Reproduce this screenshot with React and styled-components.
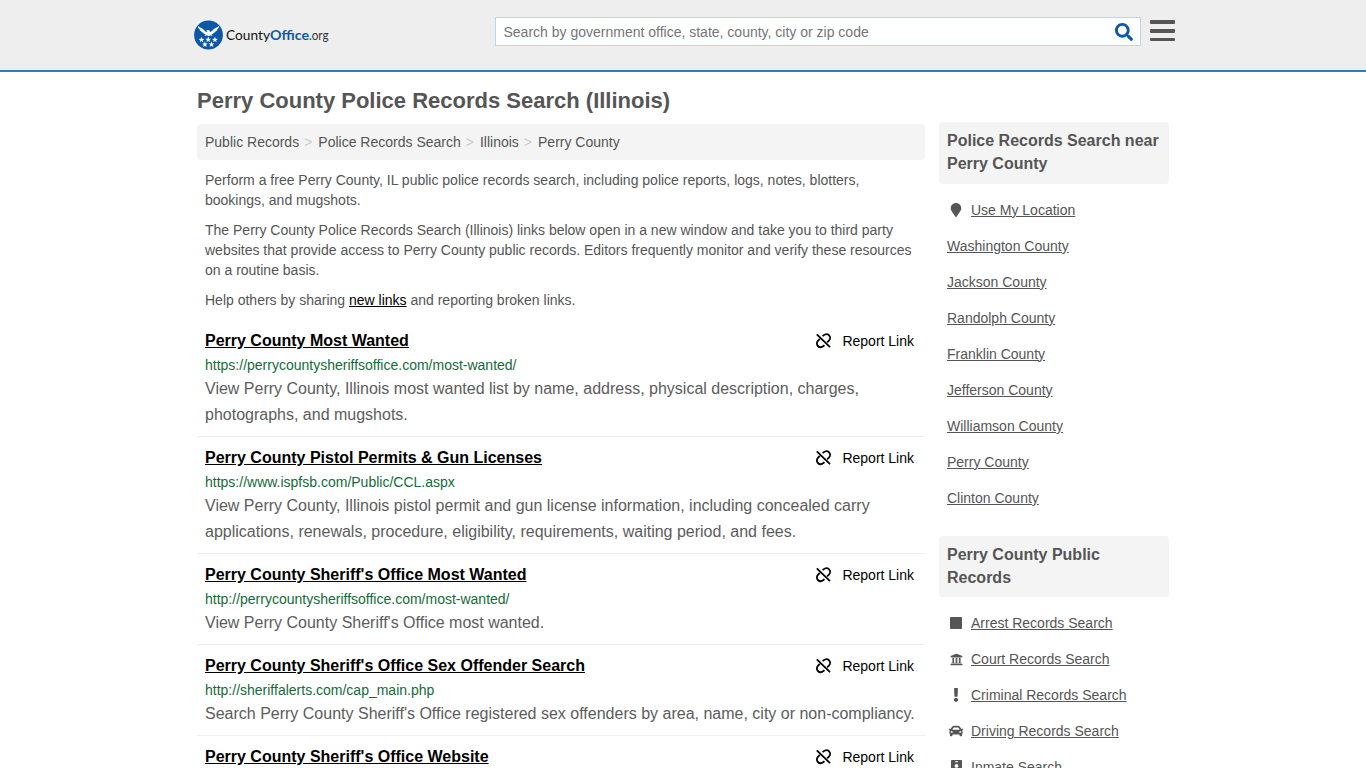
import styled, { createGlobalStyle } from "styled-components";
import { FaSearch, FaMapMarker, FaUniversity, FaExclamation, FaCar } from "react-icons/fa";

const crumbs = ["Public Records", "Police Records Search", "Illinois", "Perry County"];

const links = [
  {
    title: "Perry County Most Wanted",
    url: "https://perrycountysheriffsoffice.com/most-wanted/",
    text: "View Perry County, Illinois most wanted list by name, address, physical description, charges, photographs, and mugshots.",
  },
  {
    title: "Perry County Pistol Permits & Gun Licenses",
    url: "https://www.ispfsb.com/Public/CCL.aspx",
    text: "View Perry County, Illinois pistol permit and gun license information, including concealed carry applications, renewals, procedure, eligibility, requirements, waiting period, and fees.",
  },
  {
    title: "Perry County Sheriff's Office Most Wanted",
    url: "http://perrycountysheriffsoffice.com/most-wanted/",
    text: "View Perry County Sheriff's Office most wanted.",
  },
  {
    title: "Perry County Sheriff's Office Sex Offender Search",
    url: "http://sheriffalerts.com/cap_main.php",
    text: "Search Perry County Sheriff's Office registered sex offenders by area, name, city or non-compliancy.",
  },
  {
    title: "Perry County Sheriff's Office Website",
  },
];

const counties = [
  "Washington County",
  "Jackson County",
  "Randolph County",
  "Franklin County",
  "Jefferson County",
  "Williamson County",
  "Perry County",
  "Clinton County",
];

const records = [
  { name: "Arrest Records Search", icon: <SquareIcon /> },
  { name: "Court Records Search", icon: <FaUniversity size={13} /> },
  { name: "Criminal Records Search", icon: <FaExclamation size={14} /> },
  { name: "Driving Records Search", icon: <FaCar size={14} /> },
  { name: "Inmate Search", icon: <InmateIcon /> },
];

function SquareIcon() {
  return (
    <svg width="12" height="12" viewBox="0 0 12 12">
      <rect width="12" height="12" rx="1" fill="currentColor" />
    </svg>
  );
}

function InmateIcon() {
  return (
    <svg width="11" height="14" viewBox="0 0 11 14">
      <path
        fill="currentColor"
        fillRule="evenodd"
        d="M1 0h9a1 1 0 0 1 1 1v12a1 1 0 0 1-1 1H1a1 1 0 0 1-1-1V1a1 1 0 0 1 1-1zM4 1.2v1h3v-1zM5.5 4a1.9 1.9 0 1 0 0 3.8 1.9 1.9 0 0 0 0-3.8zM2.2 11.4h6.6c0-1.7-1.1-2.8-3.3-2.8s-3.3 1.1-3.3 2.8z"
      />
    </svg>
  );
}

function UnlinkIcon() {
  return (
    <svg width="15" height="16" viewBox="0 0 15 16" fill="none" stroke="#000" strokeWidth="1.8">
      <path d="M.8 1.3 14 14.2" />
      <path d="M6.6 3.2 7.5 2.4c1.8-1.5 4.2-1.4 5.6-.1 1.4 1.5 1.3 3.9-.2 5.4l-1.7 1.6" />
      <path d="M3.8 6 2.1 7.7c-1.5 1.5-1.6 3.9-.2 5.3 1.4 1.4 3.8 1.4 5.6 0l.9-.9" />
    </svg>
  );
}

function Star({ x, y }) {
  return (
    <polygon
      transform={`translate(${x} ${y}) scale(1.2)`}
      points="0,-2.5 .65,-.8 2.4,-.75 1,.35 1.5,2.1 0,1.1 -1.5,2.1 -1,.35 -2.4,-.75 -.65,-.8"
    />
  );
}

function Logo() {
  return (
    <LogoSvg width="140" height="30" viewBox="0 0 140 30">
      <circle cx="14.5" cy="15" r="14.4" fill="#0c57a6" />
      <g fill="#fff">
        <path d="M3.9 6c2 1.6 4.4 2.2 6.2 4 .9.9 1.5 1.7 2.6 2.1l.9-.7-1.4-.3c.4-.9 1.4-1.3 2.4-1 .8.2 1.3.8 1.4 1.9 1.2-.4 1.9-1.1 2.8-2 1.8-1.8 4.2-2.4 6.2-4-.1 1.7-.8 2.9-1.9 3.5.2.7-.4 1.5-1.4 1.8-.1.9-.9 1.4-1.9 1.5-.4.9-1.2 1.3-2.3 1.2l.9 2-2.3-.8-1.6 1-1.6-1-2.3.8.9-2c-1.1.1-1.9-.3-2.3-1.2-1-.1-1.8-.6-1.9-1.5-1-.3-1.6-1.1-1.4-1.8C4.700 8.900 4 7.700 3.900 6z" />
        <Star x={7.5} y={19.8} />
        <Star x={14.2} y={19.6} />
        <Star x={20.9} y={19.8} />
        <Star x={10.9} y={24.4} />
        <Star x={17.5} y={24.4} />
      </g>
      <g fontFamily="Lato, sans-serif" fontSize="14">
        <text x="32" y="20" textLength="44" lengthAdjust="spacingAndGlyphs" fill="#111">County</text>
        <text x="76" y="20" textLength="39" lengthAdjust="spacingAndGlyphs" fill="#0c57a6" fontWeight="700">Office</text>
        <text x="115" y="20" textLength="19.5" lengthAdjust="spacingAndGlyphs" fill="#333" fontSize="13.5">.org</text>
      </g>
    </LogoSvg>
  );
}

function App() {
  return (
    <>
      <GlobalStyle />
      <Header>
        <HeaderInner>
          <Logo />
          <SearchBox>
            <SearchInput placeholder="Search by government office, state, county, city or zip code" />
            <FaSearch size={18} color="#0c57a6" />
          </SearchBox>
          <MenuButton aria-label="Menu">
            <MenuBar />
            <MenuBar />
            <MenuBar />
          </MenuButton>
        </HeaderInner>
      </Header>
      <Page>
        <Main>
          <PageTitle>Perry County Police Records Search (Illinois)</PageTitle>
          <Breadcrumb>
            {crumbs.map((crumb) => (
              <Crumb key={crumb}>{crumb}</Crumb>
            ))}
          </Breadcrumb>
          <Intro>
            <p>
              Perform a free Perry County, IL public police records search, including police reports, logs, notes,
              blotters, bookings, and mugshots.
            </p>
            <p>
              The Perry County Police Records Search (Illinois) links below open in a new window and take you to third
              party websites that provide access to Perry County public records. Editors frequently monitor and verify
              these resources on a routine basis.
            </p>
            <p>
              Help others by sharing <a href="#new">new links</a> and reporting broken links.
            </p>
          </Intro>
          {links.map((link) => (
            <Entry key={link.title}>
              <EntryHead>
                <EntryTitle href="#entry">{link.title}</EntryTitle>
                <Report>
                  <UnlinkIcon />
                  Report Link
                </Report>
              </EntryHead>
              {link.url && <EntryUrl>{link.url}</EntryUrl>}
              {link.text && <EntryText>{link.text}</EntryText>}
            </Entry>
          ))}
        </Main>
        <Sidebar>
          <SideTitle>Police Records Search near Perry County</SideTitle>
          <SideList>
            <SideItem>
              <IconSlot>
                <FaMapMarker size={14} />
              </IconSlot>
              <a href="#location">Use My Location</a>
            </SideItem>
            {counties.map((county) => (
              <SideItem key={county}>
                <a href="#county">{county}</a>
              </SideItem>
            ))}
          </SideList>
          <SideTitle>Perry County Public Records</SideTitle>
          <SideList>
            {records.map((record) => (
              <SideItem key={record.name}>
                <IconSlot>{record.icon}</IconSlot>
                <a href="#record">{record.name}</a>
              </SideItem>
            ))}
          </SideList>
        </Sidebar>
      </Page>
    </>
  );
}

const GlobalStyle = createGlobalStyle`
  * {
    box-sizing: border-box;
  }
  body {
    margin: 0;
    height: 768px;
    overflow: hidden;
    background: #fff;
    color: #555;
    font-family: "Liberation Sans", Arial, sans-serif;
    font-size: 14px;
    line-height: 20px;
  }
`;

const Header = styled.header`
  height: 72px;
  background: #eee;
  border-bottom: 2px solid #337ab7;
`;

const HeaderInner = styled.div`
  display: flex;
  align-items: flex-start;
  width: 982px;
  margin: 0 auto;
  padding: 17px 0 0 2px;
`;

const LogoSvg = styled.svg`
  flex: none;
  margin: 3px 161px 0 0;
`;

const SearchBox = styled.div`
  display: flex;
  align-items: center;
  width: 646px;
  height: 29px;
  padding-right: 7px;
  flex: none;
  background: #fff;
  border: 1px solid #bcd5e8;
`;

const SearchInput = styled.input`
  flex: 1;
  height: 27px;
  padding: 0 7.5px;
  border: 0;
  outline: 0;
  background: transparent;
  font-family: inherit;
  font-size: 14px;

  &::placeholder {
    color: #757575;
  }
`;

const MenuButton = styled.button`
  display: flex;
  flex-direction: column;
  gap: 5px;
  margin: 3px 0 0 9px;
  padding: 0;
  border: 0;
  background: none;
`;

const MenuBar = styled.span`
  width: 25px;
  height: 3.8px;
  border-radius: 1px;
  background: #555;
`;

const Page = styled.div`
  display: flex;
  align-items: flex-start;
  gap: 14px;
  width: 972px;
  margin: 0 auto;
`;

const Main = styled.main`
  width: 728px;
`;

const PageTitle = styled.h1`
  margin: 17px 0 11px;
  font-size: 22px;
  line-height: 24px;
`;

const Breadcrumb = styled.nav`
  display: flex;
  padding: 8px;
  border-radius: 4px;
  background: #f4f4f4;
`;

const Crumb = styled.span`
  & + &::before {
    content: ">";
    padding: 0 6px 0 5px;
    color: #ccc;
  }
`;

const Intro = styled.div`
  padding: 10px 8px 0;

  p {
    margin: 0 0 10px;
  }
  a {
    color: #000;
  }
`;

const Entry = styled.article`
  padding: 8px;
  border-bottom: 1px solid #eee;
`;

const EntryHead = styled.div`
  display: flex;
  justify-content: space-between;
  height: 26px;
`;

const EntryTitle = styled.a`
  color: #000;
  font-size: 16px;
  font-weight: bold;
  line-height: 26px;
`;

const Report = styled.span`
  display: flex;
  align-items: center;
  gap: 11px;
  padding-right: 3px;
  color: #000;
`;

const EntryUrl = styled.div`
  height: 22px;
  color: #146b38;
  line-height: 23px;
`;

const EntryText = styled.div`
  margin-right: -4px;
  color: #5c5c5c;
  font-size: 16px;
  line-height: 26px;
`;

const Sidebar = styled.aside`
  width: 230px;
  padding-top: 50px;
`;

const SideTitle = styled.h2`
  margin: 0;
  padding: 8px;
  border-radius: 4px;
  background: #f4f4f4;
  font-size: 16px;
  line-height: 22.86px;
`;

const SideList = styled.ul`
  margin: 8px 0 20px;
  padding: 0 8px;
  list-style: none;
`;

const SideItem = styled.li`
  display: flex;
  align-items: center;
  height: 36px;

  a {
    color: #555;
  }
`;

const IconSlot = styled.span`
  display: flex;
  justify-content: center;
  width: 18px;
  margin-right: 6px;
`;

export default App;
